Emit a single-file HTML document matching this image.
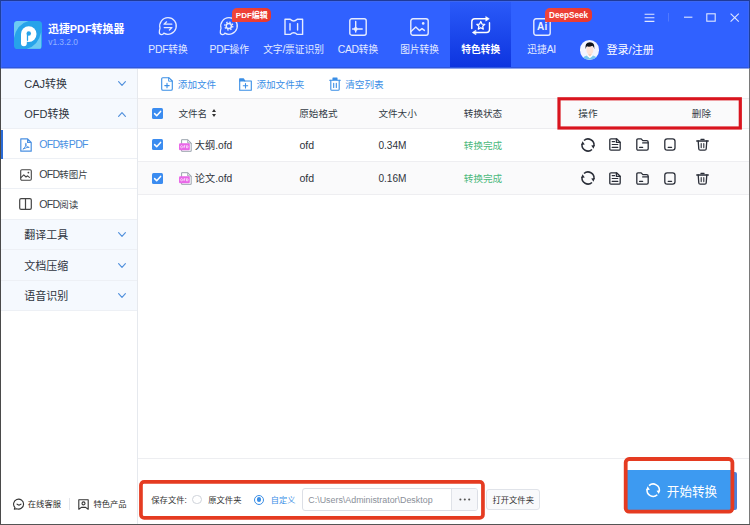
<!DOCTYPE html>
<html lang="zh">
<head>
<meta charset="utf-8">
<title>迅捷PDF转换器</title>
<style>
*{margin:0;padding:0;box-sizing:border-box}
html,body{width:750px;height:525px;overflow:hidden;background:#fff}
body{font-family:"Liberation Sans","Noto Sans CJK SC",sans-serif;position:relative;color:#333}
.a{position:absolute}
.t{position:absolute;white-space:nowrap;line-height:12px;height:12px;overflow:visible}
svg{position:absolute;overflow:visible}
.c{font-style:normal;letter-spacing:0}
#hdr{left:0;top:0;width:750px;height:68px;background:#3061ff}
#hdrb{left:0;top:67px;width:750px;height:1px;background:#2f57dc}
#seltab{left:450px;top:0;width:61px;height:68px;background:linear-gradient(#2b5bf9,#0d34df)}
.bd{font-weight:bold}
.nav{color:#e4ebff;font-size:10.4px;letter-spacing:-.3px;text-align:center;width:80px}
.nav .c{font-size:9.7px}
.sb{left:1px;width:136px;background:#f5f9fe;border-bottom:1px solid #edf0f5}
.sbt{left:24.2px;font-size:11px;color:#2f3540}
.sbi{left:39.2px;font-size:10.6px;letter-spacing:-.75px;color:#3a3f48}
.sbi .c{font-size:9.5px}
.tb{font-size:9.6px;color:#3a8ee6}
.th{font-size:9.6px;color:#333a45}
.td{font-size:10.2px;color:#30343c}
.ft{font-size:8.3px;color:#333}
.cb{width:11px;height:11px;background:#3b8cf0;border-radius:1.5px}
.red{border:2.6px solid #dc1424}
.red2{border:3.4px solid #e5402a;border-radius:6px}
</style>
</head>
<body>

<!-- header -->
<div class="a" id="hdr"></div>
<div class="a" id="seltab"></div>
<div class="a" id="hdrb"></div>

<!-- logo -->
<div class="a" style="left:14.4px;top:20.8px;width:27.2px;height:27.8px;border-radius:3.6px;background:#27a3ea;overflow:hidden">
  <svg width="27.2" height="27.8" viewBox="0 0 28 28" preserveAspectRatio="none" style="left:0;top:0">
    <path d="M0 0 H15 Q3 3 0 17Z" fill="#6dcaf3"/>
    <path d="M28 28 H13 Q25 25 28 11Z" fill="#6dcaf3"/>
    <circle cx="15.2" cy="13.2" r="8" fill="#fff"/>
    <path d="M7.2 13.2 H13.2 V22.4 A3 3 0 0 1 7.2 22.4Z" fill="#fff"/>
    <circle cx="15.2" cy="12.6" r="2.3" fill="#27a3ea"/>
    <path d="M13.9 13.5 V19.4" stroke="#27a3ea" stroke-width="1.3" stroke-linecap="round"/>
  </svg>
</div>
<div class="t bd bk" style="left:48px;top:23px;line-height:12px;height:12px;font-size:10.9px;color:#fff"><i class="c">迅</i><i class="c">捷</i>PDF<i class="c">转</i><i class="c">换</i><i class="c">器</i></div>
<div class="t" style="left:48.2px;top:37px;line-height:10px;height:10px;font-size:8.4px;color:#93b4ff">v1.3.2.0</div>

<!-- nav -->
<div class="t nav" style="left:128px;top:44px;line-height:11px;height:11px">PDF<i class="c">转</i><i class="c">换</i></div>
<div class="t nav" style="left:189.2px;top:44px;line-height:11px;height:11px">PDF<i class="c">操</i><i class="c">作</i></div>
<div class="t nav" style="left:253.5px;top:44px;line-height:11px;height:11px"><i class="c">文</i><i class="c">字</i>/<i class="c">票</i><i class="c">证</i><i class="c">识</i><i class="c">别</i></div>
<div class="t nav" style="left:318px;top:44px;line-height:11px;height:11px">CAD<i class="c">转</i><i class="c">换</i></div>
<div class="t nav" style="left:379.6px;top:43.8px;line-height:11px;height:11px"><i class="c">图</i><i class="c">片</i><i class="c">转</i><i class="c">换</i></div>
<div class="t bd nav" style="left:440.7px;top:43.8px;line-height:11px;height:11px;color:#fff"><i class="c">特</i><i class="c">色</i><i class="c">转</i><i class="c">换</i></div>
<div class="t nav" style="left:501.6px;top:44px;line-height:11px;height:11px"><i class="c">迅</i><i class="c">捷</i>AI</div>
<!-- nav icons -->
<svg width="20" height="20" viewBox="0 0 20 20" style="left:157.7px;top:16px" fill="none" stroke="#e6ecff" stroke-width="1.25" stroke-linecap="round" stroke-linejoin="round">
  <path d="M2.02 12.29 A8.3 8.3 0 1 1 5.76 17.14 Q5.2 18.4 3.7 18.6 Q1.4 18.7 1.3 16.4 Q1.3 14.3 2.02 12.29 Z"/>
  <path d="M13.8 8.2 H6 L8.6 5.8 M6.2 11.6 H14 L11.4 14"/>
</svg>
<svg width="20" height="20" viewBox="0 0 20 20" style="left:219px;top:16px" fill="none" stroke="#e6ecff" stroke-width="1.25" stroke-linecap="round" stroke-linejoin="round">
  <path d="M2.02 12.29 A8.3 8.3 0 1 1 5.76 17.14 Q5.2 18.4 3.7 18.6 Q1.4 18.7 1.3 16.4 Q1.3 14.3 2.02 12.29 Z"/>
  <circle cx="9.8" cy="10" r="2.6" stroke-width="1.5"/>
  <circle cx="9.8" cy="10" r="4" stroke-width="1.3" stroke-dasharray="1.5 1.6416" stroke-linecap="butt"/>
</svg>
<svg width="20" height="18" viewBox="0 0 20 18" style="left:284px;top:18px" fill="none" stroke="#e6ecff" stroke-width="1.4" stroke-linejoin="round">
  <path d="M1 1.2 H6.2 Q9.7 4.6 13.2 1.2 H18.6 V16.4 H13.2 Q9.7 13 6.2 16.4 H1 Z"/>
  <path d="M6 5.6 V12 M13.6 5.6 V12" stroke-linecap="round"/>
</svg>
<svg width="18" height="18" viewBox="0 0 18 18" style="left:349.3px;top:18px" fill="none" stroke="#e6ecff" stroke-width="1.4" stroke-linejoin="round" stroke-linecap="round">
  <rect x=".8" y=".8" width="16.4" height="16.4" rx="2"/>
  <path d="M6.7 3.4 V14 M3.6 11 H13.2"/>
  <circle cx="6.7" cy="11" r="1.9" fill="#e6ecff" stroke="none"/>
</svg>
<svg width="19" height="18" viewBox="0 0 19 18" style="left:410px;top:18px" fill="none" stroke="#e6ecff" stroke-width="1.4" stroke-linejoin="round" stroke-linecap="round">
  <rect x=".8" y=".8" width="17.4" height="16.4" rx="2.2"/>
  <path d="M1 13.6 L5.8 9 L9.4 12.6 L12 10.6 L14.4 12.4"/>
  <circle cx="13.2" cy="5.4" r="1.3" fill="#e6ecff" stroke="none"/>
</svg>
<svg width="20" height="20" viewBox="0 0 20 20" style="left:470.8px;top:16.4px" fill="none" stroke="#fff" stroke-width="1.4" stroke-linejoin="round" stroke-linecap="round">
  <path d="M.8 12.6 V5.8 Q.8 2.8 3.8 2.8 H15"/>
  <path d="M18.5 6.8 V13.5 Q18.5 16.5 15.5 16.5 H4.6"/>
  <path d="M15 .7 L18.3 2.8 L15 4.9 Z M4.6 14.4 L1.3 16.5 L4.6 18.6 Z" fill="#fff" stroke-width=".6"/>
  <path d="M9.8 5.5 L11.0 8.1 L13.8 8.4 L11.7 10.3 L12.3 13.1 L9.8 11.7 L7.3 13.1 L7.9 10.3 L5.8 8.4 L8.6 8.1 Z" stroke-width="1.25"/>
</svg>
<svg width="18" height="18" viewBox="0 0 18 18" style="left:533px;top:18px" fill="none" stroke="#e6ecff" stroke-width="1.4" stroke-linejoin="round">
  <rect x=".8" y=".8" width="16.4" height="16.4" rx="2.2"/>
</svg>
<div class="t bd" style="left:537px;top:21px;font-size:10px;color:#eef2ff;letter-spacing:.2px">Ai</div>
<!-- badges -->
<div class="a" style="left:232.4px;top:8px;width:38.6px;height:13.6px;background:linear-gradient(90deg,#f0453a,#e8372f);border-radius:5px 5px 5px 1px"></div>
<div class="t bd" style="left:235.8px;top:11px;line-height:9px;height:9px;font-size:8px;color:#fff">PDF<i class="c">编</i><i class="c">辑</i></div>
<div class="a" style="left:545.4px;top:8px;width:46.6px;height:14px;background:linear-gradient(90deg,#f0453a,#e8372f);border-radius:5px 5px 5px 1px"></div>
<div class="t bd" style="left:549px;top:11px;line-height:9px;height:9px;font-size:8.2px;color:#fff">DeepSeek</div>
<!-- user -->
<div class="a" style="left:579.6px;top:40.2px;width:19.8px;height:19.8px;border-radius:50%;background:#f3f4ff;overflow:hidden">
  <svg width="19.8" height="19.8" viewBox="0 0 20 20" style="left:0;top:0">
    <path d="M2 20 Q3 15.4 10 15.4 Q17 15.4 18 20Z" fill="#78c6ee"/>
    <path d="M6.6 15.6 L10 14.6 L13.4 15.6 L10 18.4Z" fill="#fff"/>
    <path d="M8.4 12.6 h3.2 v2.6 l-1.6 1.4 l-1.6 -1.4Z" fill="#f9cdb8"/>
    <ellipse cx="10" cy="10" rx="3.5" ry="4.5" fill="#fde2d8"/>
    <path d="M5.6 9.4 Q4.6 2.2 10 2.2 Q15.4 2.2 14.4 9.4 Q14 6.6 12.4 5.8 Q9.4 7.6 7 6.4 Q6 7.4 5.6 9.4Z" fill="#10131c"/>
  </svg>
</div>
<div class="t md" style="left:606.4px;top:44px;line-height:12px;height:12px;font-size:11.1px;color:#fff"><i class="c">登</i><i class="c">录</i>/<i class="c">注</i><i class="c">册</i></div>
<!-- window controls -->
<svg width="110" height="12" viewBox="0 0 110 12" style="left:640px;top:12px" fill="none" stroke="#dfe7ff" stroke-width="1.1">
  <path d="M4.6 2.2 H14.4 M4.6 5.8 H14.4 M4.6 9.4 H14.4"/>
  <path d="M28.5 1 V9.5" stroke="#5079ff" stroke-width="1"/>
  <path d="M44 5.2 H52.4"/>
  <rect x="66.8" y="1.8" width="8.4" height="7.4"/>
  <path d="M90.6 1.6 L98.8 9.6 M98.8 1.6 L90.6 9.6"/>
</svg>

<!-- sidebar -->
<div class="a" style="left:1px;top:68px;width:137px;height:456px;background:#fff;border-right:1px solid #e6e9ee"></div>
<div class="a sb" style="top:68px;height:31px"></div>
<div class="a sb" style="top:99px;height:30px"></div>
<div class="a sb" style="top:129px;height:30px;background:#fff"></div>
<div class="a sb" style="top:159px;height:30px;background:#fff"></div>
<div class="a sb" style="top:189px;height:31px;background:#fff"></div>
<div class="a sb" style="top:220px;height:30px"></div>
<div class="a sb" style="top:250px;height:31px"></div>
<div class="a sb" style="top:281px;height:30px"></div>
<div class="a" style="left:1px;top:130px;width:2.4px;height:29px;background:#2a6bd6"></div>
<div class="t sbt" style="top:78px;line-height:12px;height:12px">CAJ<i class="c">转</i><i class="c">换</i></div>
<div class="t sbt" style="top:108px;line-height:12px;height:12px">OFD<i class="c">转</i><i class="c">换</i></div>
<div class="t sbi" style="top:138px;line-height:12px;height:12px;color:#4a90e2">OFD<i class="c">转</i>PDF</div>
<div class="t sbi" style="top:168px;line-height:12px;height:12px">OFD<i class="c">转</i><i class="c">图</i><i class="c">片</i></div>
<div class="t sbi" style="top:198px;line-height:12px;height:12px">OFD<i class="c">阅</i><i class="c">读</i></div>
<div class="t sbt" style="top:229.2px;line-height:12px;height:12px"><i class="c">翻</i><i class="c">译</i><i class="c">工</i><i class="c">具</i></div>
<div class="t sbt" style="top:259.6px;line-height:12px;height:12px"><i class="c">文</i><i class="c">档</i><i class="c">压</i><i class="c">缩</i></div>
<div class="t sbt" style="top:289.8px;line-height:12px;height:12px"><i class="c">语</i><i class="c">音</i><i class="c">识</i><i class="c">别</i></div>
<svg width="8" height="5" viewBox="0 0 8 5" style="left:118.2px;top:81.3px" fill="none" stroke="#4f8fdc" stroke-width="1.15" stroke-linecap="round" stroke-linejoin="round"><path d="M.6 .7 L4 4.3 L7.4 .7"/></svg>
<svg width="8" height="5" viewBox="0 0 8 5" style="left:118.2px;top:112.4px" fill="none" stroke="#4f8fdc" stroke-width="1.15" stroke-linecap="round" stroke-linejoin="round"><path d="M.6 4.3 L4 .7 L7.4 4.3"/></svg>
<svg width="8" height="5" viewBox="0 0 8 5" style="left:118.2px;top:232px" fill="none" stroke="#4f8fdc" stroke-width="1.15" stroke-linecap="round" stroke-linejoin="round"><path d="M.6 .7 L4 4.3 L7.4 .7"/></svg>
<svg width="8" height="5" viewBox="0 0 8 5" style="left:118.2px;top:262.6px" fill="none" stroke="#4f8fdc" stroke-width="1.15" stroke-linecap="round" stroke-linejoin="round"><path d="M.6 .7 L4 4.3 L7.4 .7"/></svg>
<svg width="8" height="5" viewBox="0 0 8 5" style="left:118.2px;top:293.4px" fill="none" stroke="#4f8fdc" stroke-width="1.15" stroke-linecap="round" stroke-linejoin="round"><path d="M.6 .7 L4 4.3 L7.4 .7"/></svg>
<svg width="12" height="14" viewBox="0 0 12 14" style="left:19.8px;top:138px" fill="none" stroke="#4a90e2" stroke-width="1.2" stroke-linejoin="round" stroke-linecap="round">
  <path d="M.8 .8 H7.6 L11.2 4.4 V13.2 H.8 Z M7.6 .8 V4.4 H11.2"/>
  <path d="M3.2 11 Q5.6 9.4 6.2 6.2 Q6.4 5.2 5.8 5.2 Q5.2 5.4 5.6 6.8 Q6.6 9.2 9.2 9.4 Q8 8.6 3.2 11Z" stroke-width=".9"/>
</svg>
<svg width="12" height="12" viewBox="0 0 12 12" style="left:19.8px;top:168.8px" fill="none" stroke="#444" stroke-width="1.1" stroke-linejoin="round" stroke-linecap="round">
  <rect x=".7" y=".7" width="10.6" height="10.6" rx="1.2"/>
  <path d="M.9 8.6 L3.8 5.8 L6 8 L7.6 6.8 L9.4 8.4"/>
  <circle cx="8.4" cy="3.6" r=".9" fill="#444" stroke="none"/>
</svg>
<svg width="13" height="12" viewBox="0 0 13 12" style="left:19.2px;top:198.2px" fill="none" stroke="#444" stroke-width="1.2" stroke-linejoin="round">
  <rect x=".7" y=".7" width="11.6" height="10.6" rx="1.4"/>
  <path d="M6.5 .8 V11.2"/>
</svg>

<!-- main -->
<div class="a" style="left:138px;top:98px;width:611px;height:31px;background:#fafafb;border-top:1px solid #ececef;border-bottom:1px solid #ececef"></div>
<div class="a" style="left:138px;top:161px;width:611px;height:34px;background:#fafafb;border-top:1px solid #eeeef1;border-bottom:1px solid #eeeef1"></div>
<div class="a" style="left:138px;top:458px;width:611px;height:1px;background:#edeef1"></div>

<!-- toolbar -->
<svg width="12" height="14" viewBox="0 0 12 14" style="left:160.5px;top:76.6px" fill="none" stroke="#3a8ee6" stroke-width="1.1" stroke-linejoin="round" stroke-linecap="round">
  <path d="M1.8 .7 H7.8 L11.3 4 V12 Q11.3 13.3 10 13.3 H2 Q.7 13.3 .7 12 V1.8 Q.7 .7 1.8 .7 Z"/><path d="M7.6 .9 V4.2 H11.1" stroke-width=".9"/>
  <path d="M6 6.4 V10.8 M3.8 8.6 H8.2"/>
</svg>
<div class="t tb" style="left:177.8px;top:78.5px;line-height:11px;height:11px"><i class="c">添</i><i class="c">加</i><i class="c">文</i><i class="c">件</i></div>
<svg width="13" height="13" viewBox="0 0 13 13" style="left:239px;top:77.5px" fill="none" stroke="#3a8ee6" stroke-width="1.1" stroke-linejoin="round" stroke-linecap="round">
  <path d="M.7 3 H12.3 V12.3 H.7 Z"/><path d="M.7 3 V.9 H4.6 L5.8 3" fill="#3a8ee6"/>
  <path d="M6.5 5.6 V10 M4.3 7.8 H8.7"/>
</svg>
<div class="t tb" style="left:256.4px;top:78.5px;line-height:11px;height:11px"><i class="c">添</i><i class="c">加</i><i class="c">文</i><i class="c">件</i><i class="c">夹</i></div>
<svg width="12" height="14" viewBox="0 0 12 14" style="left:329px;top:76.5px" fill="none" stroke="#3a8ee6" stroke-width="1.1" stroke-linejoin="round" stroke-linecap="round">
  <path d="M.7 3.2 H11.3"/><path d="M4 3 V1 H8 V3" fill="#3a8ee6"/>
  <path d="M1.8 3.4 V12.2 Q1.8 13.3 2.9 13.3 H9.1 Q10.2 13.3 10.2 12.2 V3.4"/>
  <path d="M4.7 6.2 V10.4 M7.3 6.2 V10.4"/>
</svg>
<div class="t tb" style="left:345.2px;top:78.5px;line-height:11px;height:11px"><i class="c">清</i><i class="c">空</i><i class="c">列</i><i class="c">表</i></div>

<!-- table header -->
<div class="a cb" style="left:152px;top:107.6px"></div>
<svg width="11" height="11" viewBox="0 0 11 11" style="left:152px;top:107.6px" fill="none" stroke="#fff" stroke-width="1.5" stroke-linecap="round" stroke-linejoin="round"><path d="M2.6 5.6 L4.7 7.7 L8.6 3.4"/></svg>
<div class="t th" style="left:178.4px;top:108px;line-height:11px;height:11px"><i class="c">文</i><i class="c">件</i><i class="c">名</i></div>
<svg width="4" height="8" viewBox="0 0 4 8" style="left:211.8px;top:109.4px" fill="#333"><path d="M2 0 L4 3 H0Z M2 8 L4 5 H0Z"/></svg>
<div class="t th" style="left:299.2px;top:108px;line-height:11px;height:11px"><i class="c">原</i><i class="c">始</i><i class="c">格</i><i class="c">式</i></div>
<div class="t th" style="left:378.4px;top:108px;line-height:11px;height:11px"><i class="c">文</i><i class="c">件</i><i class="c">大</i><i class="c">小</i></div>
<div class="t th" style="left:463.8px;top:108px;line-height:11px;height:11px"><i class="c">转</i><i class="c">换</i><i class="c">状</i><i class="c">态</i></div>
<div class="t th" style="left:578.3px;top:108px;line-height:11px;height:11px"><i class="c">操</i><i class="c">作</i></div>
<div class="t th" style="left:691.8px;top:108px;line-height:11px;height:11px"><i class="c">删</i><i class="c">除</i></div>

<!-- row 1 -->
<div class="a cb" style="left:152px;top:139.4px"></div>
<svg width="11" height="11" viewBox="0 0 11 11" style="left:152px;top:139.4px" fill="none" stroke="#fff" stroke-width="1.5" stroke-linecap="round" stroke-linejoin="round"><path d="M2.6 5.6 L4.7 7.7 L8.6 3.4"/></svg>
<svg width="13" height="13" viewBox="0 0 13 13" style="left:179px;top:138.8px" fill="none" stroke-linejoin="round">
  <path d="M2.6 .7 H8.8 L12.2 4 V12.3 H2.6 Z M8.8 .7 V4 H12.2" stroke="#9aa3ad" stroke-width="1" fill="#fff"/>
  <rect x="0" y="4.3" width="10.8" height="6.9" rx="1.2" fill="#e968e8"/>
  <path d="M2.6 6.7 a1.1 1.1 0 1 0 .01 0 M5 8.9 V6.7 H6.3 M5 7.8 H6.1 M7.5 6.7 V8.9 H8.1 a1.1 1.1 0 0 0 0 -2.2 Z" stroke="#fff" stroke-width=".65"/>
</svg>
<div class="t td" style="left:194.8px;top:140px;line-height:11px;height:11px"><i class="c">大</i><i class="c">纲</i>.ofd</div>
<div class="t td" style="left:299.4px;top:139px;line-height:12px;height:12px;font-size:10.6px">ofd</div>
<div class="t td" style="left:378.4px;top:140px;line-height:11px;height:11px;font-size:10.1px">0.34M</div>
<div class="t th" style="left:463.8px;top:139.5px;line-height:11px;height:11px;color:#4cb97c"><i class="c">转</i><i class="c">换</i><i class="c">完</i><i class="c">成</i></div>
<svg width="14" height="14" viewBox="0 0 14 14" style="left:581.2px;top:137.8px" fill="none" stroke="#2a2e38" stroke-width="1.5" stroke-linecap="butt">
  <path d="M2.99 2.54 A6 6 0 0 1 12.91 8.04 M11.01 11.46 A6 6 0 0 1 1.09 5.96"/>
  <path d="M13.9 7 L10.2 7.5 L12.5 10.8 Z M.1 7 L3.8 6.5 L1.5 3.2 Z" fill="#2a2e38" stroke="none"/>
</svg>
<svg width="12" height="13" viewBox="0 0 12 13" style="left:609.4px;top:138.4px" fill="none" stroke="#2a2e38" stroke-width="1.3" stroke-linecap="round" stroke-linejoin="round">
  <path d="M2 .8 H7.6 L11.2 4.2 V11 Q11.2 12.2 10 12.2 H2 Q.8 12.2 .8 11 V2 Q.8 .8 2 .8 Z"/><path d="M7.4 1 V4.4 H11"/>
  <path d="M3.2 3.6 H5.6 M3.2 6.5 H8.8 M3.2 9.4 H8.8" stroke-width="1.2"/>
</svg>
<svg width="13" height="13" viewBox="0 0 13 13" style="left:636px;top:138.4px" fill="none" stroke="#2a2e38" stroke-width="1.3" stroke-linecap="round" stroke-linejoin="round">
  <path d="M2 .9 H5.2 L6.8 2.6 H10.6 Q12.2 2.6 12.2 4.2 V10.8 Q12.2 12.2 10.8 12.2 H2.2 Q.8 12.2 .8 10.8 V2.2 Q.8 .9 2 .9 Z"/>
  <path d="M6.6 4.9 H12" stroke-width="1.1"/>
  <path d="M3.6 9.4 H6.6" stroke-width="1.3"/>
</svg>
<svg width="12" height="13" viewBox="0 0 12 13" style="left:664px;top:138.4px" fill="none" stroke="#2a2e38" stroke-width="1.3" stroke-linecap="round" stroke-linejoin="round">
  <rect x=".8" y=".8" width="10.2" height="11.4" rx="2.4"/>
  <path d="M4.2 9.3 H7.6" stroke-width="1.3"/>
</svg>
<svg width="13" height="13" viewBox="0 0 13 13" style="left:696px;top:138.4px" fill="none" stroke="#2a2e38" stroke-width="1.3" stroke-linecap="round" stroke-linejoin="round">
  <path d="M.8 3 H12.2" stroke-width="1.5"/><path d="M4.9 1.3 H8.1" stroke-width="1.2"/>
  <path d="M2.2 3 L2.8 11 Q2.9 12.2 4.2 12.2 H8.8 Q10.1 12.2 10.2 11 L10.8 3"/>
  <path d="M5.2 5.6 V9.6 M7.8 5.6 V9.6" stroke-width="1.1"/>
</svg>

<!-- row 2 -->
<div class="a cb" style="left:152px;top:172.8px"></div>
<svg width="11" height="11" viewBox="0 0 11 11" style="left:152px;top:172.8px" fill="none" stroke="#fff" stroke-width="1.5" stroke-linecap="round" stroke-linejoin="round"><path d="M2.6 5.6 L4.7 7.7 L8.6 3.4"/></svg>
<svg width="13" height="13" viewBox="0 0 13 13" style="left:179px;top:172px" fill="none" stroke-linejoin="round">
  <path d="M2.6 .7 H8.8 L12.2 4 V12.3 H2.6 Z M8.8 .7 V4 H12.2" stroke="#9aa3ad" stroke-width="1" fill="#fff"/>
  <rect x="0" y="4.3" width="10.8" height="6.9" rx="1.2" fill="#e968e8"/>
  <path d="M2.6 6.7 a1.1 1.1 0 1 0 .01 0 M5 8.9 V6.7 H6.3 M5 7.8 H6.1 M7.5 6.7 V8.9 H8.1 a1.1 1.1 0 0 0 0 -2.2 Z" stroke="#fff" stroke-width=".65"/>
</svg>
<div class="t td" style="left:194.8px;top:173px;line-height:11px;height:11px"><i class="c">论</i><i class="c">文</i>.ofd</div>
<div class="t td" style="left:299.4px;top:172px;line-height:12px;height:12px;font-size:10.6px">ofd</div>
<div class="t td" style="left:378.4px;top:173px;line-height:11px;height:11px;font-size:10.1px">0.16M</div>
<div class="t th" style="left:463.8px;top:172.9px;line-height:11px;height:11px;color:#4cb97c"><i class="c">转</i><i class="c">换</i><i class="c">完</i><i class="c">成</i></div>
<svg width="14" height="14" viewBox="0 0 14 14" style="left:581.2px;top:171.2px" fill="none" stroke="#2a2e38" stroke-width="1.5" stroke-linecap="butt">
  <path d="M2.99 2.54 A6 6 0 0 1 12.91 8.04 M11.01 11.46 A6 6 0 0 1 1.09 5.96"/>
  <path d="M13.9 7 L10.2 7.5 L12.5 10.8 Z M.1 7 L3.8 6.5 L1.5 3.2 Z" fill="#2a2e38" stroke="none"/>
</svg>
<svg width="12" height="13" viewBox="0 0 12 13" style="left:609.4px;top:171.79999999999998px" fill="none" stroke="#2a2e38" stroke-width="1.3" stroke-linecap="round" stroke-linejoin="round">
  <path d="M2 .8 H7.6 L11.2 4.2 V11 Q11.2 12.2 10 12.2 H2 Q.8 12.2 .8 11 V2 Q.8 .8 2 .8 Z"/><path d="M7.4 1 V4.4 H11"/>
  <path d="M3.2 3.6 H5.6 M3.2 6.5 H8.8 M3.2 9.4 H8.8" stroke-width="1.2"/>
</svg>
<svg width="13" height="13" viewBox="0 0 13 13" style="left:636px;top:171.79999999999998px" fill="none" stroke="#2a2e38" stroke-width="1.3" stroke-linecap="round" stroke-linejoin="round">
  <path d="M2 .9 H5.2 L6.8 2.6 H10.6 Q12.2 2.6 12.2 4.2 V10.8 Q12.2 12.2 10.8 12.2 H2.2 Q.8 12.2 .8 10.8 V2.2 Q.8 .9 2 .9 Z"/>
  <path d="M6.6 4.9 H12" stroke-width="1.1"/>
  <path d="M3.6 9.4 H6.6" stroke-width="1.3"/>
</svg>
<svg width="12" height="13" viewBox="0 0 12 13" style="left:664px;top:171.79999999999998px" fill="none" stroke="#2a2e38" stroke-width="1.3" stroke-linecap="round" stroke-linejoin="round">
  <rect x=".8" y=".8" width="10.2" height="11.4" rx="2.4"/>
  <path d="M4.2 9.3 H7.6" stroke-width="1.3"/>
</svg>
<svg width="13" height="13" viewBox="0 0 13 13" style="left:696px;top:171.79999999999998px" fill="none" stroke="#2a2e38" stroke-width="1.3" stroke-linecap="round" stroke-linejoin="round">
  <path d="M.8 3 H12.2" stroke-width="1.5"/><path d="M4.9 1.3 H8.1" stroke-width="1.2"/>
  <path d="M2.2 3 L2.8 11 Q2.9 12.2 4.2 12.2 H8.8 Q10.1 12.2 10.2 11 L10.8 3"/>
  <path d="M5.2 5.6 V9.6 M7.8 5.6 V9.6" stroke-width="1.1"/>
</svg>

<!-- sidebar footer -->
<svg width="12" height="12" viewBox="0 0 12 12" style="left:13px;top:498.4px" fill="none" stroke="#333" stroke-width="1.1" stroke-linecap="round" stroke-linejoin="round">
  <path d="M2 9.6 A5 5 0 1 1 3.6 10.7 L1.3 11.2 Z"/><path d="M4 6.2 Q6 8.2 8 6.2"/>
</svg>
<div class="t md ft" style="left:27.8px;top:499.4px;line-height:10px;height:10px;color:#2b2b2b"><i class="c">在</i><i class="c">线</i><i class="c">客</i><i class="c">服</i></div>
<div class="a" style="left:69px;top:498px;width:1px;height:12px;background:#e3e5ea"></div>
<svg width="11" height="11" viewBox="0 0 11 11" style="left:78px;top:498.5px" fill="none" stroke="#333" stroke-width="1.1" stroke-linecap="round" stroke-linejoin="round">
  <path d="M.8 .8 H10.2 V10.2 L7.6 8.4 H3.4 L.8 10.2 Z"/><circle cx="5.5" cy="4.4" r="1.5"/>
</svg>
<div class="t md ft" style="left:93.4px;top:499.4px;line-height:10px;height:10px;color:#2b2b2b"><i class="c">特</i><i class="c">色</i><i class="c">产</i><i class="c">品</i></div>

<!-- save bar -->
<div class="t ft" style="left:151.3px;top:495px;line-height:10px;height:10px"><i class="c">保</i><i class="c">存</i><i class="c">文</i><i class="c">件</i>:</div>
<div class="a" style="left:192.4px;top:495.3px;width:9.2px;height:9.2px;border:1px solid #cfd3da;border-radius:50%;background:#fff"></div>
<div class="t ft" style="left:208.2px;top:495.4px;line-height:10px;height:10px"><i class="c">原</i><i class="c">文</i><i class="c">件</i><i class="c">夹</i></div>
<div class="a" style="left:254px;top:494.8px;width:10px;height:10px;border:1px solid #3a8ee6;border-radius:50%;background:#fff"></div>
<div class="a" style="left:256.6px;top:497.4px;width:4.8px;height:4.8px;border-radius:50%;background:#3a8ee6"></div>
<div class="t ft" style="left:270.8px;top:496.4px;line-height:9px;height:9px;color:#3a8ee6;font-size:8.2px"><i class="c">自</i><i class="c">定</i><i class="c">义</i></div>
<div class="a" style="left:302px;top:488px;width:176px;height:22.5px;border:1px solid #dcdfe6;border-radius:3px;background:#fff"></div>
<div class="a" style="left:451px;top:489px;width:1px;height:20.5px;background:#dfe2e8"></div>
<div class="a" style="left:452px;top:489px;width:25px;height:20.5px;background:#f6f7fa;border-radius:0 2px 2px 0"></div>
<div class="t" style="left:308.3px;top:495px;line-height:10px;height:10px;font-size:8.9px;color:#8a8f99">C:\Users\Administrator\Desktop</div>
<svg width="12" height="3" viewBox="0 0 12 3" style="left:459px;top:498px" fill="#555"><circle cx="1.4" cy="1.5" r="1.05"/><circle cx="5.8" cy="1.5" r="1.05"/><circle cx="10.2" cy="1.5" r="1.05"/></svg>
<div class="a" style="left:486px;top:489px;width:54px;height:20.5px;border:1px solid #e0e3e9;border-radius:3px;background:#f9fafc"></div>
<div class="t ft" style="left:492.4px;top:495.3px;line-height:10px;height:10px"><i class="c">打</i><i class="c">开</i><i class="c">文</i><i class="c">件</i><i class="c">夹</i></div>

<!-- start button -->
<div class="a" style="left:730px;top:471.5px;width:6.8px;height:38px;background:#4a82dc;border-radius:0 2px 2px 0"></div>
<div class="a" style="left:626px;top:470px;width:107px;height:42px;background:#3d9af1"></div>
<div class="t" style="left:666.8px;top:484.8px;line-height:14px;height:14px;font-size:12.6px;color:#fff"><i class="c">开</i><i class="c">始</i><i class="c">转</i><i class="c">换</i></div>
<svg width="14.4" height="14.4" viewBox="0 0 14 14" style="left:646.2px;top:483.3px" fill="none" stroke="#fff" stroke-width="1.5" stroke-linecap="butt">
  <path d="M2.99 2.54 A6 6 0 0 1 12.91 8.04 M11.01 11.46 A6 6 0 0 1 1.09 5.96"/>
  <path d="M13.9 7 L10.2 7.5 L12.5 10.8 Z M.1 7 L3.8 6.5 L1.5 3.2 Z" fill="#fff" stroke="none"/>
</svg>

<!-- red annotation boxes -->
<svg width="750" height="525" viewBox="0 0 750 525" style="left:0;top:0" fill="none">
  <rect x="559" y="98.8" width="181.3" height="29.2" stroke="#d9141e" stroke-width="3.2"/>
  <rect x="140.95" y="481.85" width="342" height="36.1" rx="3.2" stroke="#e53b21" stroke-width="3.7"/>
  <rect x="625.7" y="459" width="106.7" height="52.7" rx="3.4" stroke="#e53b21" stroke-width="3.8"/>
</svg>

<div class="a" style="left:1px;top:68px;width:748px;height:1px;background:#8ea4ee"></div>
<!-- window frame -->
<div class="a" style="left:1px;top:1px;width:748px;height:1px;background:#4169ee;opacity:.8"></div>
<div class="a" style="left:1px;top:1px;width:1px;height:67px;background:#4169ee;opacity:.8"></div>
<div class="a" style="left:748px;top:1px;width:1px;height:67px;background:#4169ee;opacity:.8"></div>
<div class="a" style="left:0;top:0;width:750px;height:1px;background:#1e3a9a"></div>
<div class="a" style="left:0;top:0;width:1px;height:68px;background:#1e409e"></div>
<div class="a" style="left:749px;top:0;width:1px;height:68px;background:#1e409e"></div>
<div class="a" style="left:0;top:68px;width:1px;height:457px;background:#4a4a4a"></div>
<div class="a" style="left:749px;top:68px;width:1px;height:457px;background:#7a7a7a"></div>
<div class="a" style="left:0;top:524px;width:750px;height:1px;background:#555"></div>
</body>
</html>
